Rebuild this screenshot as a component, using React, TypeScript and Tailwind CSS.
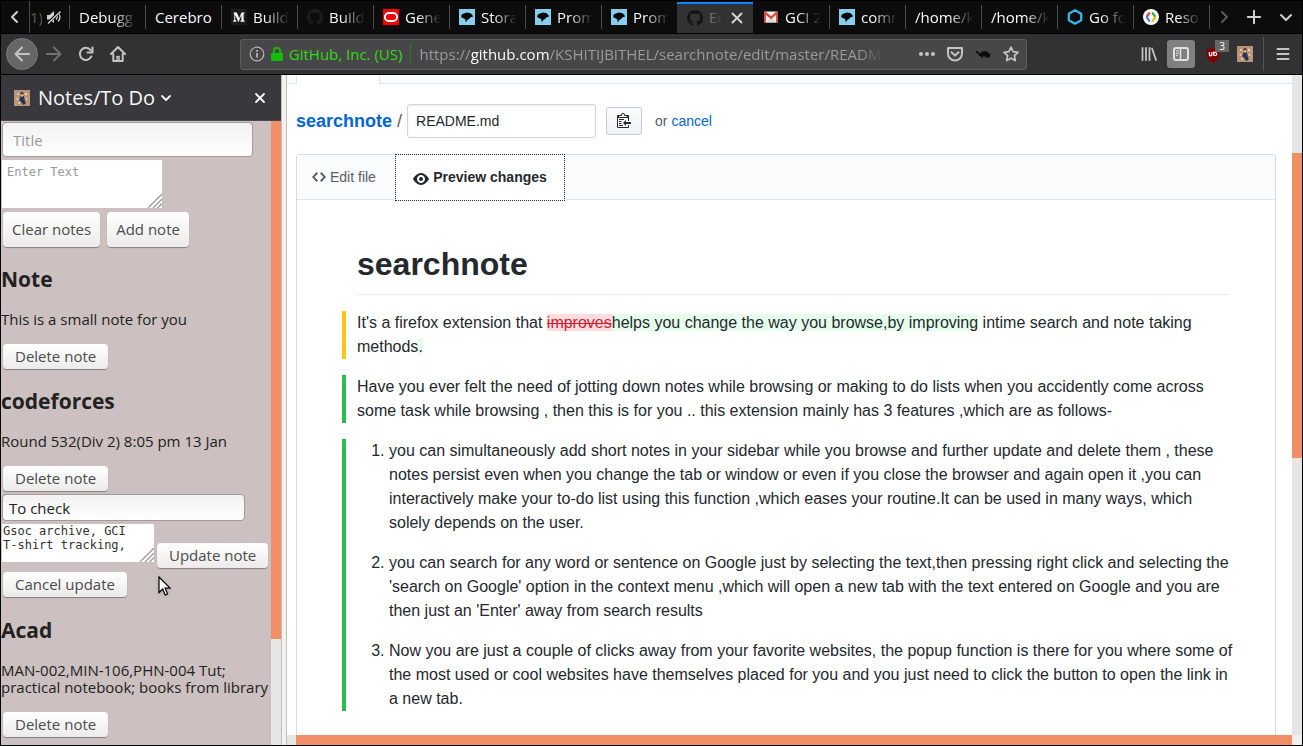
import React from 'react';

type IconProps = { className?: string };

const MapTile = () => (
  <svg viewBox="0 0 16 16" className="size-4 shrink-0" aria-hidden="true">
    <rect width="16" height="16" fill="#87ceeb" />
    <path d="M2 7.300 3.200 5.200 5.500 4.200 8 3.400l3 .7 2 1.500 1.200 2-1.700.4-1.500.8-.9 1.300-2 .8-.3 1.600H6.300l.2-2L5 9.500 3 8.800z" fill="#05080a" />
  </svg>
);

const GithubMark = ({ className = '' }: IconProps) => (
  <svg viewBox="0 0 16 16" className={`size-4 shrink-0 ${className}`} fill="currentColor" aria-hidden="true">
    <path d="M8 0C3.580 0 0 3.580 0 8c0 3.540 2.290 6.530 5.470 7.590.4.07.55-.17.55-.38 0-.19-.01-.82-.01-1.490-2.010.37-2.530-.49-2.690-.94-.09-.23-.48-.94-.82-1.130-.28-.15-.68-.52-.01-.53.63-.01 1.080.58 1.230.82.72 1.210 1.870.87 2.330.66.07-.52.28-.87.51-1.070-1.780-.2-3.640-.89-3.640-3.950 0-.87.31-1.590.82-2.150-.08-.2-.36-1.020.08-2.120 0 0 .67-.21 2.200.82.64-.18 1.320-.27 2-.27s1.360.09 2 .27c1.530-1.040 2.200-.82 2.200-.82.44 1.100.16 1.920.08 2.120.51.56.82 1.270.82 2.150 0 3.070-1.870 3.750-3.650 3.950.29.25.54.73.54 1.480 0 1.070-.01 1.930-.01 2.200 0 .21.15.46.55.38A8.010 8.010 0 0 0 16 8c0-4.420-3.580-8-8-8z" />
  </svg>
);

const MediumIcon = () => (
  <svg viewBox="0 0 16 16" className="size-4 shrink-0" aria-hidden="true">
    <rect width="16" height="16" fill="#1c1c1c" />
    <path d="M2.500 3.500h3.300L8.200 9l2.300-5.500h3.100v.6l-1 .8v6.400l1 .8v.6H9.400v-.6l1-.8V6L7.700 12.700h-.5L4.200 6v4.700l1.200 1.400v.6H2.200v-.6l1.100-1.400V5l-.8-.9z" fill="#fff" />
  </svg>
);

const RedRingIcon = () => (
  <svg viewBox="0 0 16 16" className="size-4 shrink-0" aria-hidden="true">
    <rect width="16" height="16" fill="#f80000" />
    <rect x="1.900" y="4" width="12.200" height="8" rx="4" fill="none" stroke="#fff" strokeWidth="1.900" />
  </svg>
);

const GmailIcon = () => (
  <svg viewBox="0 0 16 16" className="size-4 shrink-0" aria-hidden="true">
    <rect x="1" y="2.500" width="14" height="11" rx="1" fill="#f2f2f2" />
    <path d="M3 13.500 8 8l5 5.500z" fill="#dcdcdc" />
    <path d="M1 4v9.500h2V6l5 4.200L13 6v7.500h2V4c0-1-.6-1.500-1.500-1.500L8 7.300 2.500 2.500C1.600 2.500 1 3 1 4z" fill="#dd4b39" />
  </svg>
);

const HexIcon = () => (
  <svg viewBox="0 0 16 16" className="size-4 shrink-0" aria-hidden="true">
    <path d="M8 1.300 14.200 4.700v6.600L8 14.700l-6.200-3.400V4.700z" fill="none" stroke="#30b9ef" strokeWidth="2.300" strokeLinejoin="round" />
  </svg>
);

const DevelopersIcon = () => (
  <svg viewBox="0 0 16 16" className="size-4 shrink-0" aria-hidden="true">
    <circle cx="8" cy="8" r="8" fill="#fff" />
    <g fill="none" strokeWidth="2.300" strokeLinecap="round">
      <path d="M6.300 4.200 4 7.500" stroke="#ea4335" />
      <path d="M4 8.500l2.300 3.300" stroke="#4285f4" />
      <path d="M9.700 4.200 12 7.500" stroke="#34a853" />
      <path d="M12 8.500l-2.300 3.300" stroke="#fbbc05" />
    </g>
  </svg>
);

const Avatar = () => (
  <svg viewBox="0 0 16 16" className="size-4 shrink-0" aria-hidden="true">
    <rect width="16" height="16" fill="#b8957a" />
    <g fill="#e9d8ae">
      <circle cx="4" cy="4" r="1" />
      <circle cx="12" cy="4" r="1.200" />
      <circle cx="3.500" cy="9" r="1.100" />
      <circle cx="12.500" cy="9" r="1" />
      <circle cx="5" cy="13" r="1" />
    </g>
    <path d="M6.500 6h3.200l1.200 4 .9 3.500-2.500 1.500-2.200-3-1.500-2z" fill="#27304f" />
    <path d="M6 7.500 4.500 10l1.500 1zM9 8l1 3 1.500-.5z" fill="#6a5a50" />
    <circle cx="8" cy="3.400" r="1.600" fill="#5b3b28" />
    <path d="M7.300 4.300h1.500v2.500H7.300z" fill="#f0c7a2" />
  </svg>
);

const MutedIcon = () => (
  <svg viewBox="0 0 16 16" className="size-4 shrink-0" aria-hidden="true">
    <path d="M1 6h2.500L8 2v12L3.500 10.500H1z" fill="#d0d0d0" />
    <path d="M10 5.500c1.400 1.500 1.400 3.500 0 5M12 3.500c2.600 2.600 2.600 6.400 0 9" fill="none" stroke="#d0d0d0" strokeWidth="1.300" />
    <path d="M1.500 14.500 14.500 2" stroke="#0c0c0d" strokeWidth="3" />
    <path d="M2 14.500 14.500 2.500" stroke="#d0d0d0" strokeWidth="1.400" />
  </svg>
);

type Stroke = { d: string; className?: string; width?: number };
const StrokeIcon = ({ d, className = '', width = 2 }: Stroke) => (
  <svg viewBox="0 0 16 16" className={`size-4 shrink-0 ${className}`} fill="none" stroke="currentColor" strokeWidth={width} strokeLinecap="round" strokeLinejoin="round" aria-hidden="true">
    <path d={d} />
  </svg>
);

type Tab = { id: string; text: string; icon?: React.ReactNode; active?: boolean; afterActive?: boolean };

const tabs: Tab[] = [
  { id: 'debug', text: 'Debugg' },
  { id: 'cerebro', text: 'Cerebro' },
  { id: 'medium', text: 'Build', icon: <MediumIcon /> },
  { id: 'build', text: 'Build', icon: <GithubMark className="text-[#1d1d1f]" /> },
  { id: 'gene', text: 'Gene', icon: <RedRingIcon /> },
  { id: 'stora', text: 'Stora', icon: <MapTile /> },
  { id: 'prom1', text: 'Prom', icon: <MapTile /> },
  { id: 'prom2', text: 'Prom', icon: <MapTile /> },
  { id: 'edit', text: 'Ed', icon: <GithubMark className="text-[#141416]" />, active: true },
  { id: 'gci', text: 'GCI 2', icon: <GmailIcon />, afterActive: true },
  { id: 'comm', text: 'comm', icon: <MapTile /> },
  { id: 'home1', text: '/home/k' },
  { id: 'home2', text: '/home/k' },
  { id: 'go', text: 'Go fo', icon: <HexIcon /> },
  { id: 'reso', text: 'Reso', icon: <DevelopersIcon /> },
];

const fade = '[mask-image:linear-gradient(to_left,transparent,black_24px)]';

function TabStrip() {
  return (
    <div className="flex h-[33px] shrink-0 items-stretch border-b border-black bg-[#0c0c0d] text-[15px] text-[#f9f9fa]">
      <button aria-label="Scroll tabs left" className="flex w-7 shrink-0 items-center justify-center text-[#d0d0d0]">
        <StrokeIcon d="M10 3 5 8l5 5" />
      </button>
      <button className="flex w-10 shrink-0 items-center gap-1 border-l border-[#4a4a4b]">
        <span className="w-3 overflow-hidden whitespace-nowrap text-right text-[#5a5a5b]">1)</span>
        <MutedIcon />
      </button>
      <div role="tablist" className="grid min-w-0 flex-1 grid-cols-[repeat(15,minmax(0,1fr))]">
        {tabs.map((t) =>
          t.active ? (
            <button key={t.id} role="tab" aria-selected="true" className="mt-px flex min-w-0 items-center gap-[6px] border-t-2 border-[#0a84ff] bg-[#323234] pr-2 pb-[2px] pl-[10px]">
              {t.icon}
              <span className={`min-w-0 flex-1 overflow-hidden whitespace-nowrap text-left text-[#b0b0b2] ${fade}`}>{t.text}</span>
              <StrokeIcon d="M3.500 3.500l9 9M12.500 3.500l-9 9" width={1.8} className="text-[#d7d7d8]" />
            </button>
          ) : (
            <button key={t.id} role="tab" aria-selected="false" className="flex min-w-0 items-center">
              <span className={`h-6 w-px shrink-0 ${t.afterActive ? '' : 'bg-[#4a4a4b]'}`} />
              <span className="flex min-w-0 flex-1 items-center gap-[6px] pr-2 pl-[9px]">
                {t.icon}
                <span className={`min-w-0 flex-1 overflow-hidden whitespace-nowrap text-left ${t.text === 'Cerebro' ? '' : fade}`}>{t.text}</span>
              </span>
            </button>
          ),
        )}
      </div>
      <button aria-label="Scroll tabs right" className="flex w-[30px] shrink-0 items-center text-[#5b5b5c]">
        <span className="h-6 w-px bg-[#4a4a4b]" />
        <StrokeIcon d="M6 3l5 5-5 5" className="ml-[6px]" />
      </button>
      <button aria-label="New tab" className="flex w-[30px] shrink-0 items-center justify-center text-[#d0d0d0]">
        <StrokeIcon d="M8 1.800v12.400M1.800 8h12.400" />
      </button>
      <button aria-label="List all tabs" className="flex w-[33px] shrink-0 items-center justify-center text-[#d0d0d0]">
        <StrokeIcon d="M3 6l5 5 5-5" />
      </button>
    </div>
  );
}

function NavBar() {
  const tool = 'flex size-8 shrink-0 items-center justify-center';
  const small = 'flex w-7 shrink-0 items-center justify-center';
  return (
    <div className="flex h-[41px] shrink-0 items-center border-b border-black bg-[#323234] pr-[3px] pl-[5px] text-[#c4c4c5]">
      <button aria-label="Back" className={`${tool} rounded-full border border-[#79797a] bg-[#666667]`}>
        <StrokeIcon d="M15 8H1.500M8 1.500 1.500 8 8 14.500" />
      </button>
      <button aria-label="Forward" className={`${tool} text-[#707072]`}>
        <StrokeIcon d="M1 8h13.500M8 1.500 14.500 8 8 14.500" />
      </button>
      <button aria-label="Reload" className={tool}>
        <StrokeIcon d="M13.300 10.500A6 6 0 1 1 12.500 4M14.500 1.500v5h-5" />
      </button>
      <button aria-label="Home" className={tool}>
        <svg viewBox="0 0 16 16" className="size-4" fill="none" stroke="currentColor" strokeWidth="2" strokeLinejoin="round" strokeLinecap="round" aria-hidden="true">
          <path d="M1 8l7-7 7 7M3.300 8v7h9.400V8" />
          <path d="M7 15v-4.500h2V15" strokeWidth="1.500" />
        </svg>
      </button>
      <div className="flex-[106]" />
      <div className="flex h-[31px] min-w-0 flex-[786] items-center rounded-[3px] border border-[#5d5d5e] bg-[#474749] pr-px text-[15px]">
        <button aria-label="Site information" className="flex shrink-0 items-center gap-1 pl-2 whitespace-nowrap text-[#30d912]">
          <svg viewBox="0 0 16 16" className="size-4 text-[#b4b4b5]" fill="none" stroke="currentColor" aria-hidden="true">
            <circle cx="8" cy="8" r="6.800" strokeWidth="1.200" />
            <path d="M8 7v4.500M8 4v1.700" strokeWidth="1.800" />
          </svg>
          <svg viewBox="0 0 16 16" className="size-4" aria-hidden="true">
            <path d="M4.800 8V5a3.200 3.200 0 0 1 6.400 0v3" fill="none" stroke="#12bc00" strokeWidth="2" />
            <rect x="2" y="7" width="12" height="8" rx="1" fill="#12bc00" />
          </svg>
          <span>GitHub, Inc. (US)</span>
        </button>
        <span className="mx-2 h-[22px] w-px shrink-0 bg-[#2f7a26]" />
        <div role="textbox" aria-label="Address" className={`min-w-0 shrink grow-0 basis-[464px] overflow-hidden whitespace-nowrap text-[#9a9a9b] ${fade}`}>
          https://<span className="text-[#f9f9fa]">github.com</span>/KSHITIJBITHEL/searchnote/edit/master/README.md
        </div>
        <div className="flex-1" />
        <button aria-label="Page actions" className={small}>
          <svg viewBox="0 0 16 16" className="size-4" fill="currentColor" aria-hidden="true">
            <circle cx="2" cy="8" r="2" />
            <circle cx="8" cy="8" r="2" />
            <circle cx="14" cy="8" r="2" />
          </svg>
        </button>
        <button aria-label="Save to Pocket" className={small}>
          <StrokeIcon d="M1 2h14v5.500a7 7 0 0 1-14 0zM4.500 6.300 8 9.600l3.500-3.300" />
        </button>
        <button aria-label="Turtle" className={small}>
          <svg viewBox="0 0 16 16" className="size-4" fill="#0b0b0c" aria-hidden="true">
            <path d="M.5 5.200 2.300 5l1.200 1 1.500 1.800L6.500 6l3-1 3 .8L14.500 8l1.300.5-1 1.300.2 1.700h-1.500l-.6-1-.5 1.300h-1.300l-.4-1.300H7.800l-.4 1.300H6l-.2-1.600-2-.6L3 7.500.8 6.600z" />
          </svg>
        </button>
        <button aria-label="Bookmark this page" className={small}>
          <StrokeIcon d="M8 1.200l2.100 4.500 4.900.6-3.600 3.400.9 4.900L8 12.200l-4.300 2.400.9-4.900L1 6.300l4.900-.6z" width={1.700} />
        </button>
      </div>
      <div className="flex-[106]" />
      <button aria-label="Library" className={tool}>
        <StrokeIcon d="M1.500 2v12M5 2v12M8.500 2v12M11 2.500l4 11.500" width={1.800} />
      </button>
      <button aria-label="Sidebars" className="mx-[2px] flex size-7 shrink-0 items-center justify-center rounded-[3px] bg-[#808081] text-[#e0e0e0]">
        <svg viewBox="0 0 16 16" className="size-4" fill="none" stroke="currentColor" aria-hidden="true">
          <rect x="1" y="2" width="14" height="12" rx="2" strokeWidth="2" />
          <path d="M7.500 2v12" strokeWidth="1.500" />
          <path d="M3 5h3M3 7.300h3M3 9.600h2" />
        </svg>
      </button>
      <button aria-label="uBlock" className={`${tool} relative`}>
        <svg viewBox="0 0 16 16" className="mt-px size-4" aria-hidden="true">
          <path d="M8 0C6 1.500 3.500 2 1.500 2v6c0 3.500 3 6 6.500 8 3.500-2 6.500-4.500 6.500-8V2C12.500 2 10 1.500 8 0z" fill="#800000" />
          <path d="M4.300 5v2.500a1.300 1.300 0 0 0 2.600 0V5M8.700 4.500V8.800M8.700 7a1.500 1.500 0 1 0 3 0 1.500 1.500 0 1 0-3 0" fill="none" stroke="#fff" strokeWidth="1.200" />
        </svg>
        <span className="absolute top-[2px] right-0 flex h-[12px] w-[14px] items-center justify-center bg-[#666667] text-[10px] leading-none text-white">3</span>
      </button>
      <button aria-label="Notes" className={tool}>
        <Avatar />
      </button>
      <span className="mr-[3px] ml-[2px] h-[34px] w-px shrink-0 bg-[#555556]" />
      <button aria-label="Menu" className={tool}>
        <StrokeIcon d="M2.500 3h11M2.500 8h11M2.500 13h11" />
      </button>
    </div>
  );
}

const Grip = () => (
  <svg viewBox="0 0 14 14" className="pointer-events-none absolute right-0 bottom-0 size-[14px]" stroke="#9b9b9b" strokeWidth="1.300" aria-hidden="true">
    <path d="M0 14 14 0M5 14l9-9M9.500 14l4.500-4.500" />
  </svg>
);

function NoteButton({ children, tall = false }: { children: React.ReactNode; tall?: boolean }) {
  return (
    <button
      className={`rounded-[4px] bg-linear-to-b from-white to-[#ecebea] text-[15px] whitespace-nowrap text-[#4c4c4c] shadow-[0_1px_1px_rgba(0,0,0,0.35)] ${
        tall ? 'h-[35px] px-[9px]' : 'h-[25px] px-3'
      }`}
    >
      {children}
    </button>
  );
}

function Note({ title, text }: { title: string; text: string }) {
  return (
    <section>
      <h2 className="pt-[18px] text-[21px] leading-7 font-bold">{title}</h2>
      <p className="pt-[18px] text-[15px] leading-[17px]">{text}</p>
      <div className="flex pt-4 pl-[2px]">
        <NoteButton>Delete note</NoteButton>
      </div>
    </section>
  );
}

function Sidebar() {
  const field = 'block rounded-[4px] border border-[#a39a9a] bg-linear-to-b from-[#f2f2f2] to-white text-[15px] outline-none';
  const area = 'block resize-none overflow-hidden bg-white font-["DejaVu_Sans_Mono",monospace] text-[12px] leading-[14px] outline-none';
  return (
    <aside className="flex w-[280px] shrink-0 flex-col">
      <header className="flex h-[46px] shrink-0 items-center border-b border-[#4a4a4f] bg-[#38383d] pr-[13px] pl-[13px] text-[#f9f9fa]">
        <button className="flex items-center gap-2 text-[20px] whitespace-nowrap">
          <Avatar />
          <span className="flex items-center gap-1">
            Notes/To Do
            <StrokeIcon d="M4 6l4 4 4-4" width={1.800} className="-mx-px" />
          </span>
        </button>
        <button aria-label="Close sidebar" className="ml-auto">
          <StrokeIcon d="M4 4l8 8M12 4l-8 8" width={1.800} />
        </button>
      </header>
      <div className="flex min-h-0 flex-1">
        <div className="min-w-0 flex-1 overflow-hidden bg-[#cdc0c0] text-[#222]">
          <form className="pt-px pl-px" onSubmit={(e) => e.preventDefault()}>
            <input aria-label="Title" placeholder="Title" className={`${field} h-[35px] w-[251px] px-[10px] placeholder:text-[#999]`} />
            <div className="relative mt-[3px] w-[160px]">
              <textarea aria-label="Text" placeholder="Enter Text" className={`${area} h-12 w-full px-[5px] pt-[5px] placeholder:text-[#999]`} />
              <Grip />
            </div>
            <div className="flex gap-[7px] pt-1 pl-px">
              <NoteButton tall>Clear notes</NoteButton>
              <NoteButton tall>Add note</NoteButton>
            </div>
          </form>
          <Note title="Note" text="This is a small note for you" />
          <Note title="codeforces" text="Round 532(Div 2) 8:05 pm 13 Jan" />
          <form className="pt-[3px] pb-px pl-px" onSubmit={(e) => e.preventDefault()}>
            <input aria-label="Note title" defaultValue="To check" className={`${field} h-[27px] w-[243px] px-[6px]`} />
            <div className="flex items-end gap-[3px]">
              <div className="relative mt-[3px] mb-[6px] w-[152px] shrink-0">
                <textarea aria-label="Note text" defaultValue={'Gsoc archive, GCI\nT-shirt tracking,'} className={`${area} h-[38px] w-full px-px text-[#333]`} />
                <Grip />
              </div>
              <NoteButton>Update note</NoteButton>
            </div>
            <div className="flex pt-1 pl-px">
              <NoteButton>Cancel update</NoteButton>
            </div>
          </form>
          <Note title="Acad" text="MAN-002,MIN-106,PHN-004 Tut; practical notebook; books from library" />
        </div>
        <div className="flex w-[10px] shrink-0 flex-col bg-[#e6e6e6]">
          <div className="flex-[518] bg-[#f08e66]" />
          <div className="flex-[106]" />
        </div>
      </div>
    </aside>
  );
}

const features = [
  'you can simultaneously add short notes in your sidebar while you browse and further update and delete them , these notes persist even when you change the tab or window or even if you close the browser and again open it ,you can interactively make your to-do list using this function ,which eases your routine.It can be used in many ways, which solely depends on the user.',
  "you can search for any word or sentence on Google just by selecting the text,then pressing right click and selecting the 'search on Google' option in the context menu ,which will open a new tab with the text entered on Google and you are then just an 'Enter' away from search results",
  'Now you are just a couple of clicks away from your favorite websites, the popup function is there for you where some of the most used or cool websites have themselves placed for you and you just need to click the button to open the link in a new tab.',
];

function Page() {
  return (
    <main className="flex min-h-0 min-w-0 flex-1 flex-col overflow-hidden bg-white font-['Liberation_Sans',Arial,sans-serif] text-[#24292e]">
      <div className="flex h-[9px] shrink-0">
        <div className="w-[10px] border-r border-b border-[#e1e4e8] bg-[#fafbfc]" />
        <div className="w-[82px]" />
        <div className="flex-1 border-b border-l border-[#e1e4e8] bg-[#fafbfc]" />
      </div>
      <div className="flex min-h-0 flex-1 flex-col pt-5 pr-4 pl-[9px]">
        <div className="flex h-[34px] shrink-0 items-center text-[14px]">
          <a href="#searchnote" className="text-[18px] font-bold text-[#0366d6]">searchnote</a>
          <span className="mx-[5px] text-[18px] text-[#586069]">/</span>
          <input aria-label="File name" defaultValue="README.md" className="h-[34px] w-[189px] rounded-[3px] border border-[#d1d5da] px-2 shadow-[inset_0_1px_2px_rgba(27,31,35,0.075)] outline-none" />
          <button aria-label="Copy file name" className="ml-[10px] flex h-7 w-9 items-center justify-center rounded-[3px] border border-[#c8ccd1] bg-linear-to-b from-[#fafbfc] to-[#eff3f6]">
            <svg viewBox="0 0 14 16" className="mb-[2px] h-4 w-[14px]" fill="currentColor" aria-hidden="true">
              <path d="M2 13h4v1H2v-1zm5-6H2v1h5V7zm2 3V8l-3 3 3 3v-2h5v-2H9zM4.500 9H2v1h2.500V9zM2 12h2.500v-1H2v1zm9 1h1v2c-.02.28-.11.52-.3.700-.19.180-.42.280-.7.300H1c-.55 0-1-.45-1-1V4c0-.55.45-1 1-1h3c0-1.110.89-2 2-2 1.110 0 2 .89 2 2h3c.55 0 1 .45 1 1v5h-1V6H1v9h10v-2zM2 5h8c0-.55-.45-1-1-1H8c-.55 0-1-.45-1-1s-.45-1-1-1-1 .45-1 1-.45 1-1 1H3c-.55 0-1 .45-1 1z" />
            </svg>
          </button>
          <span className="ml-[13px] text-[#586069]">
            or <a href="#cancel" className="text-[#0366d6]">cancel</a>
          </span>
        </div>
        <div className="mt-4 flex min-h-0 flex-1 flex-col rounded-t-[3px] border border-b-0 border-[#d9dcdf]">
          <div role="tablist" className="flex h-[45px] shrink-0 border-b border-[#e1e4e8] bg-[#fafbfc] text-[14px]">
            <button role="tab" aria-selected="false" className="flex w-[98px] items-center gap-1 pl-[15px] text-[#586069]">
              <svg viewBox="0 0 14 16" className="h-4 w-[14px]" fill="currentColor" aria-hidden="true">
                <path d="M9.500 3L8 4.500 11.500 8 8 11.500 9.500 13 14 8 9.500 3zm-5 0L0 8l4.500 5L6 11.500 2.500 8 6 4.500 4.500 3z" />
              </svg>
              Edit file
            </button>
            <button role="tab" aria-selected="true" className="-mt-px flex h-[47px] w-[170px] items-center justify-center gap-1 border border-dotted border-[#24292e] bg-white font-bold whitespace-nowrap">
              <svg viewBox="0 0 16 16" className="mt-[3px] size-4" fill="currentColor" aria-hidden="true">
                <path d="M8.060 2C3 2 0 8 0 8s3 6 8.060 6C13 14 16 8 16 8s-3-6-7.940-6zM8 12c-2.200 0-4-1.780-4-4 0-2.200 1.800-4 4-4 2.220 0 4 1.800 4 4 0 2.220-1.780 4-4 4zm2-4c0 1.110-.89 2-2 2-1.110 0-2-.89-2-2 0-1.110.89-2 2-2 1.110 0 2 .89 2 2z" />
              </svg>
              Preview changes
            </button>
          </div>
          <article className="min-h-0 flex-1 overflow-hidden pt-11 pr-10 pl-[45px] text-[16px] leading-6">
            <h1 className="mr-[5px] mb-4 ml-[15px] border-b border-[#eaecef] pb-[9px] text-[32px] leading-[41px] font-bold">searchnote</h1>
            <p className="mb-4 border-l-4 border-[#f9c513] pl-[11px]">
              It's a firefox extension that <del className="bg-[#ffdce0] text-[#cb2431]">improves</del>
              <ins className="bg-[#e6ffed] no-underline">helps you change the way you browse,by improving</ins> intime search and note taking methods<ins className="bg-[#e6ffed] no-underline">.</ins>
            </p>
            <p className="mb-4 border-l-4 border-[#2cbe4e] pl-[11px]">
              Have you ever felt the need of jotting down notes while browsing or making to do lists when you accidently come across some task while browsing , then this is for you .. this extension mainly has 3 features ,which are as follows-
            </p>
            <ol className="list-outside list-decimal space-y-4 border-l-4 border-[#2cbe4e] pl-[43px]">
              {features.map((f) => (
                <li key={f}>{f}</li>
              ))}
            </ol>
          </article>
        </div>
      </div>
    </main>
  );
}

export default function App() {
  return (
    <div className="relative flex h-screen flex-col overflow-hidden border border-black bg-white font-['Open_Sans','Noto_Sans',sans-serif]">
      <TabStrip />
      <NavBar />
      <div className="flex min-h-0 flex-1">
        <Sidebar />
        <div className="w-[6px] shrink-0 border-x border-[#c0bfbe] bg-[#f2f1f0]" />
        <div className="flex min-w-0 flex-1 flex-col">
          <div className="flex min-h-0 flex-1">
            <Page />
            <div className="flex w-[10px] shrink-0 flex-col bg-[#e6e6e6]">
              <div className="flex-[78]" />
              <div className="flex-[305] bg-[#f08e66]" />
              <div className="flex-[277]" />
            </div>
          </div>
          <div className="flex h-[10px] shrink-0 bg-[#e6e6e6]">
            <div className="w-[9px]" />
            <div className="flex-1 bg-[#f08e66]" />
            <div className="w-[10px] bg-[#f0efee]" />
          </div>
        </div>
      </div>
      <svg viewBox="0 0 13 20" className="pointer-events-none absolute top-[575px] left-[157px] h-5 w-[13px] drop-shadow" aria-hidden="true">
        <path d="M1 1v15.500l3.700-3.500 2.500 6 2.400-1-2.500-5.800H12z" fill="#fff" stroke="#000" strokeWidth="1.200" />
      </svg>
    </div>
  );
}
